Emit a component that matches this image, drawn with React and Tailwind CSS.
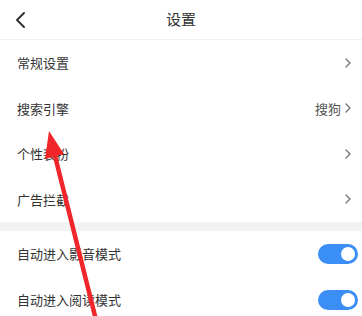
import React from "react";

const Chevron = () => (
  <svg width="8" height="12" viewBox="0 0 8 12" className="shrink-0">
    <path d="M2 2 L6 6 L2 10" fill="none" stroke="#777" strokeWidth="1.4" strokeLinecap="round" strokeLinejoin="round" />
  </svg>
);

const Toggle = () => (
  <div className="w-[40px] h-[20px] rounded-full bg-[#3a8ef6] flex items-center justify-end pr-[3px]">
    <div className="w-[14px] h-[14px] rounded-full bg-white" />
  </div>
);

const NavRow = ({ label, value }) => (
  <div className="h-[45.5px] flex items-center justify-between pl-[17px] pr-[10px]">
    <span className="text-[13px] text-[#333]">{label}</span>
    <div className="flex items-center gap-[3px]">
      {value && <span className="text-[13px] text-[#555]">{value}</span>}
      <Chevron />
    </div>
  </div>
);

const ToggleRow = ({ label }) => (
  <div className="h-[46px] flex items-center justify-between pl-[17px] pr-[4px]">
    <span className="text-[13px] text-[#333]">{label}</span>
    <Toggle />
  </div>
);

export default function App() {
  return (
    <div
      className="relative w-[362px] h-[316px] overflow-hidden bg-white"
      style={{ fontFamily: '"Noto Sans CJK SC", "Noto Sans", sans-serif' }}
    >
      <div className="h-[40px] relative flex items-center justify-center border-b border-[#f0f0f0]">
        <svg width="14" height="18" viewBox="0 0 14 18" className="absolute left-[14px] top-[11px]">
          <path d="M10 2 L3 9 L10 16" fill="none" stroke="#333" strokeWidth="2" strokeLinecap="round" strokeLinejoin="round" />
        </svg>
        <span className="text-[15px] text-[#333]">设置</span>
      </div>
      <NavRow label="常规设置" />
      <NavRow label="搜索引擎" value="搜狗" />
      <NavRow label="个性装扮" />
      <NavRow label="广告拦截" />
      <div className="h-[9px] bg-[#f2f2f2]" />
      <ToggleRow label="自动进入影音模式" />
      <ToggleRow label="自动进入阅读模式" />

      <svg className="absolute inset-0 pointer-events-none" width="362" height="316" viewBox="0 0 362 316">
        <line x1="54" y1="152" x2="96" y2="320" stroke="#f0262b" strokeWidth="4.5" />
        <polygon points="49,131 45,159 64,154" fill="#f0262b" />
      </svg>
    </div>
  );
}
